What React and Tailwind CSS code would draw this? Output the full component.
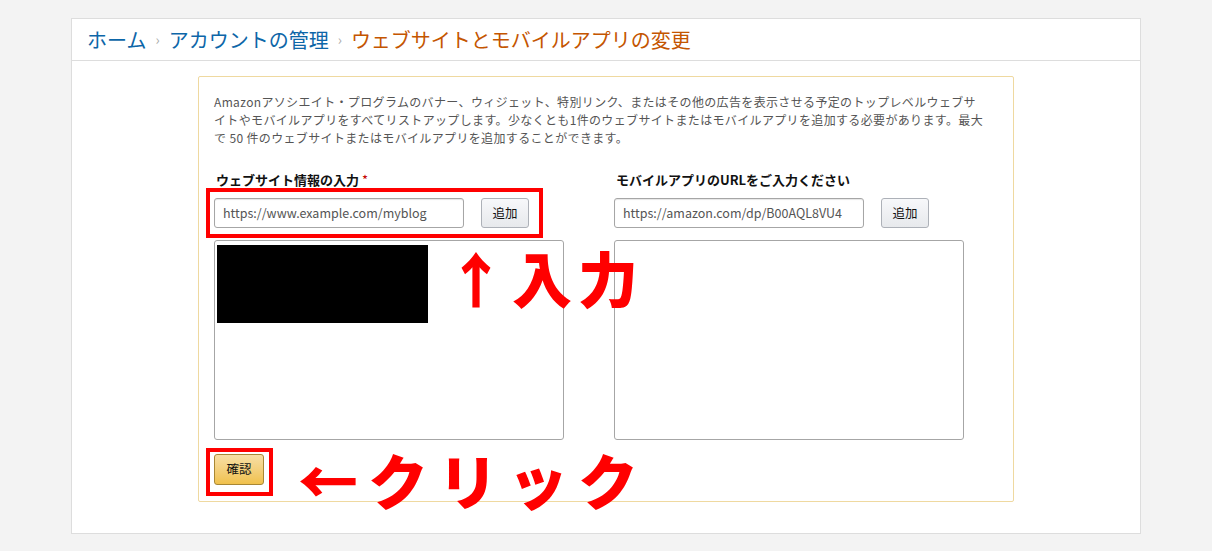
export default function App() {
  const font = { fontFamily: '"Noto Sans CJK JP", "Liberation Sans", sans-serif' };
  return (
    <div className="w-[1212px] h-[551px] bg-[#f3f3f3] pt-[18px] pl-[71px]" style={font}>
      <div className="w-[1070px] h-[516px] bg-white border border-[#dddddd] relative">
        <div className="h-[42px] border-b border-[#dddddd] flex items-center pl-[15px] text-[20px] gap-[9px]">
          <span className="text-[#0d66a8]">ホーム</span>
          <span className="text-[#aaaaaa] text-[14px]">›</span>
          <span className="text-[#0d66a8]">アカウントの管理</span>
          <span className="text-[#aaaaaa] text-[14px]">›</span>
          <span className="text-[#c45500]">ウェブサイトとモバイルアプリの変更</span>
        </div>
        <div className="ml-[126px] mt-[15px] w-[816px] h-[426px] border border-[#efd9a0] rounded-[2px] px-[15px] pt-[16px] relative">
          <p className="text-[12px] leading-[18px] text-[#555555] tracking-[0.35px] pr-[10px]">
            Amazonアソシエイト・プログラムのバナー、ウィジェット、特別リンク、またはその他の広告を表示させる予定のトップレベルウェブサイトやモバイルアプリをすべてリストアップします。少なくとも1件のウェブサイトまたはモバイルアプリを追加する必要があります。最大で 50 件のウェブサイトまたはモバイルアプリを追加することができます。
          </p>
          <div className="flex gap-[50px] mt-[24px]">
            {[
              { label: 'ウェブサイト情報の入力', req: true, ph: 'https://www.example.com/myblog', black: true },
              { label: 'モバイルアプリのURLをご入力ください', req: false, ph: 'https://amazon.com/dp/B00AQL8VU4' },
            ].map((c, i) => (
              <div key={i} className="w-[350px]">
                <div className="text-[13px] font-bold text-[#111111] h-[18px] leading-[18px] pl-[2px]">
                  {c.label}{c.req && <span className="text-[#c40000] font-normal"> *</span>}
                </div>
                <div className="flex items-center mt-[9px] gap-[17px]">
                  <div className="w-[250px] h-[30px] border border-[#a6a6a6] rounded-[3px] flex items-center px-[8px] text-[12.5px] text-[#555555] shadow-[inset_0_1px_1px_rgba(0,0,0,0.1)]">{c.ph}</div>
                  <div className="w-[48px] h-[30px] border border-[#adb1b8] rounded-[3px] bg-gradient-to-b from-[#f7f8fa] to-[#e7e9ec] flex items-center justify-center text-[12.5px] text-[#111]">追加</div>
                </div>
                <div className="mt-[12px] h-[200px] border border-[#a6a6a6] rounded-[3px] relative">
                  {c.black && <div className="absolute left-[2px] top-[4px] w-[211px] h-[78px] bg-black"></div>}
                </div>
              </div>
            ))}
          </div>
          <div className="mt-[14px] w-[50px] h-[31px] border border-[#a88734] rounded-[3px] bg-gradient-to-b from-[#f7dfa5] to-[#f0c14b] flex items-center justify-center text-[12.5px] text-[#111]">確認</div>
        </div>
        <div className="absolute left-[134px] top-[169px] w-[337px] h-[50px] border-[4px] border-[#ff0000]"></div>
        <div className="absolute left-[134px] top-[429px] w-[67px] h-[48px] border-[4px] border-[#ff0000]"></div>
        <div className="absolute left-[374px] top-[228px] text-[#ff0000] font-black text-[60px] leading-none tracking-[6px]">↑入力</div>
        <div className="absolute left-[226px] top-[430px] text-[#ff0000] font-black text-[60px] leading-none tracking-[10px]">←クリック</div>
      </div>
    </div>
  );
}
